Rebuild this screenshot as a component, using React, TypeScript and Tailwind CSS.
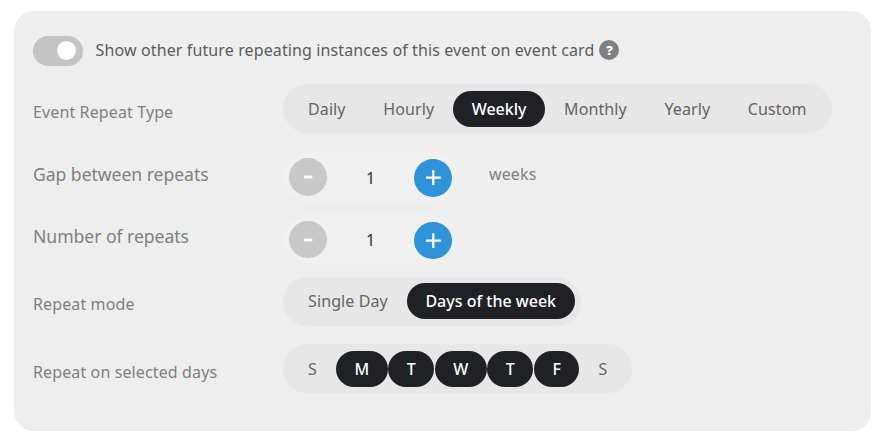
import { useState, type ReactNode } from 'react'
import clsx from 'clsx'

const repeatTypes = ['Daily', 'Hourly', 'Weekly', 'Monthly', 'Yearly', 'Custom']
const repeatModes = ['Single Day', 'Days of the week']
const weekDays = ['S', 'M', 'T', 'W', 'T', 'F', 'S']

function Row({ label, className, labelClass, children }: {
  label: string
  className: string
  labelClass: string
  children: ReactNode
}) {
  return (
    <div className={clsx('flex items-start', className)}>
      <span className={clsx('w-[250px] shrink-0 leading-6 text-[#808080]', labelClass)}>{label}</span>
      {children}
    </div>
  )
}

function PillGroup({ items, isActive, onPick, className }: {
  items: string[]
  isActive: (i: number) => boolean
  onPick: (i: number) => void
  className?: string
}) {
  return (
    <div className={clsx('flex h-[49px] gap-[0.55px] rounded-full bg-[#e7e7e7] px-[6.5px]', className)}>
      {items.map((item, i) => (
        <button
          key={i}
          onClick={() => onPick(i)}
          className={clsx(
            'h-9 rounded-full px-[18.5px] text-base leading-9 whitespace-nowrap',
            isActive(i) ? 'bg-[#202124] font-medium text-white' : 'tracking-[0.11px] text-[#656565]',
          )}
        >
          {item}
        </button>
      ))}
    </div>
  )
}

function Stepper({ buttonClass }: { buttonClass: string }) {
  const [value, setValue] = useState(1)

  return (
    <div className="flex h-[50px] w-[175px] justify-between rounded-full bg-[#f0f0f0] px-1.5 pt-1.5">
      <button
        onClick={() => setValue(Math.max(1, value - 1))}
        className={clsx('flex w-[38px] items-center justify-center rounded-full bg-[#c8c8c8]', buttonClass)}
        aria-label="Decrease"
      >
        <svg className="size-4" viewBox="0 0 16 16">
          <path d="M4 8h8.3" stroke="white" strokeWidth="2.8" />
        </svg>
      </button>
      <span className="pt-2 text-base leading-6 text-[#303030]">{value}</span>
      <div className="pt-px">
        <button
          onClick={() => setValue(value + 1)}
          className={clsx('flex w-[38px] items-center justify-center rounded-full bg-[#3092d7]', buttonClass)}
          aria-label="Increase"
        >
          <svg className="size-4" viewBox="0 0 16 16">
            <path d="M0.9 7.6h14.8M8.3 0.2v14.8" stroke="white" strokeWidth="2.3" />
          </svg>
        </button>
      </div>
    </div>
  )
}

export default function App() {
  const [showOther, setShowOther] = useState(false)
  const [type, setType] = useState(2)
  const [mode, setMode] = useState(1)
  const [days, setDays] = useState([1, 2, 3, 4, 5])

  const toggleDay = (i: number) =>
    setDays(days.includes(i) ? days.filter((d) => d !== i) : [...days, i])

  return (
    <div className="h-[440px] w-[888px] bg-white pt-[11px] pl-[14px] font-['Noto_Sans',sans-serif] text-base">
      <div className="h-[420px] w-[857px] rounded-[20px] bg-[#eeeeee] pl-[19px]">
        <div className="flex h-[73px] items-start pt-[25px]">
          <button
            onClick={() => setShowOther(!showOther)}
            className={clsx('flex h-[30px] w-[50px] shrink-0 rounded-full pt-[5px]', showOther ? 'bg-[#3092d7] pl-[7px]' : 'bg-[#c4c4c4] pl-6')}
            aria-label="Show other instances"
          >
            <span className="size-[19px] rounded-full bg-white" />
          </button>
          <span className="ml-[12.6px] pt-[2px] leading-6 tracking-[0.12px] whitespace-nowrap text-[#5c5c5c]">
            Show other future repeating instances of this event on event card
          </span>
          <span className="mt-1 ml-[5px] flex size-5 items-center justify-center rounded-full bg-[#808080] text-[13px] leading-none font-black text-white">
            ?
          </span>
        </div>

        <Row label="Event Repeat Type" className="h-[68px]" labelClass="pt-4 tracking-[0.12px]">
          <PillGroup items={repeatTypes} isActive={(i) => i === type} onPick={setType} className="pt-[7px]" />
        </Row>

        <Row label="Gap between repeats" className="h-[62px]" labelClass="pt-[10px] text-[17.6px] tracking-[-0.05px]">
          <Stepper buttonClass="h-[38px]" />
          <span className="ml-[31px] pt-[10px] leading-6 tracking-[0.12px] text-[#808080]">weeks</span>
        </Row>

        <Row label="Number of repeats" className="h-[63px]" labelClass="pt-[10px] text-[17.6px] tracking-[-0.05px]">
          <Stepper buttonClass="mt-px h-[37px]" />
        </Row>

        <Row label="Repeat mode" className="h-[67px]" labelClass="pt-[15px] tracking-[0.12px]">
          <PillGroup items={repeatModes} isActive={(i) => i === mode} onPick={setMode} className="pt-1.5" />
        </Row>

        <Row label="Repeat on selected days" className="h-[49px]" labelClass="pt-4 tracking-[0.12px]">
          <PillGroup items={weekDays} isActive={(i) => days.includes(i)} onPick={toggleDay} className="pt-[7px]" />
        </Row>
      </div>
    </div>
  )
}
